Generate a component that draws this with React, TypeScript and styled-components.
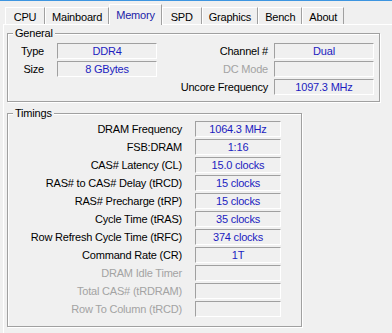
import React from 'react';
import styled, {createGlobalStyle} from "styled-components";

const GlobalStyle = createGlobalStyle`
  html, body {
    margin: 0;
    padding: 0;
    background: #f0f0f0;
    overflow: hidden;
  }
  body {
    font-family: "Liberation Sans", Arial, sans-serif;
    font-size: 11px;
    letter-spacing: -0.2px;
    color: #000;
  }
`

const tabs = ['CPU', 'Mainboard', 'Memory', 'SPD', 'Graphics', 'Bench', 'About'];

type Field = { label: string; value?: string; disabled?: boolean };

const generalLeft: Field[] = [
    {label: 'Type', value: 'DDR4'},
    {label: 'Size', value: '8 GBytes'},
];

const generalRight: Field[] = [
    {label: 'Channel #', value: 'Dual'},
    {label: 'DC Mode', disabled: true},
    {label: 'Uncore Frequency', value: '1097.3 MHz'},
];

const timings: Field[] = [
    {label: 'DRAM Frequency', value: '1064.3 MHz'},
    {label: 'FSB:DRAM', value: '1:16'},
    {label: 'CAS# Latency (CL)', value: '15.0 clocks'},
    {label: 'RAS# to CAS# Delay (tRCD)', value: '15 clocks'},
    {label: 'RAS# Precharge (tRP)', value: '15 clocks'},
    {label: 'Cycle Time (tRAS)', value: '35 clocks'},
    {label: 'Row Refresh Cycle Time (tRFC)', value: '374 clocks'},
    {label: 'Command Rate (CR)', value: '1T'},
    {label: 'DRAM Idle Timer', disabled: true},
    {label: 'Total CAS# (tRDRAM)', disabled: true},
    {label: 'Row To Column (tRCD)', disabled: true},
];

const App = () => {
    return (
        <Window>
            <GlobalStyle/>
            <TabBar>
                {tabs.map(t => (
                    <Tab key={t} $active={t === 'Memory'}>{t}</Tab>
                ))}
            </TabBar>
            <Panel>
                <Group $top={9} $bottom={6} $width={373}>
                    <Legend>General</Legend>
                    <GeneralGrid>
                        <Label>{generalLeft[0].label}</Label>
                        <ValueBox>{generalLeft[0].value}</ValueBox>
                        <Label>{generalRight[0].label}</Label>
                        <ValueBox>{generalRight[0].value}</ValueBox>

                        <Label>{generalLeft[1].label}</Label>
                        <ValueBox>{generalLeft[1].value}</ValueBox>
                        <Label $disabled>{generalRight[1].label}</Label>
                        <ValueBox/>

                        <span/>
                        <span/>
                        <Label>{generalRight[2].label}</Label>
                        <ValueBox>{generalRight[2].value}</ValueBox>
                    </GeneralGrid>
                </Group>

                <Group $top={7} $bottom={9} $width={295}>
                    <Legend>Timings</Legend>
                    <TimingsGrid>
                        {timings.map(f => (
                            <React.Fragment key={f.label}>
                                <Label $disabled={f.disabled}>{f.label}</Label>
                                <ValueBox>{f.value}</ValueBox>
                            </React.Fragment>
                        ))}
                    </TimingsGrid>
                </Group>
            </Panel>
        </Window>
    );
};

export default App;


const Window = styled.div`
  width: 392px;
  height: 333px;
  border-top: 1px solid #3d95e0;
  box-sizing: border-box;
  display: flex;
  flex-direction: column;
  overflow: hidden;
`

const TabBar = styled.div`
  display: flex;
  align-items: flex-end;
  flex: 0 0 23px;
  padding-left: 5px;
  position: relative;
  z-index: 1;
`

const Tab = styled.div<{ $active?: boolean }>`
  box-sizing: border-box;
  height: ${p => p.$active ? 21 : 17}px;
  margin-bottom: ${p => p.$active ? -1 : 0}px;
  min-width: 40px;
  padding: ${p => p.$active ? 0 : 1}px 6px 0;
  display: flex;
  align-items: center;
  justify-content: center;
  border-left: 1px solid #fff;
  border-top: 1px solid #fff;
  border-right: 1px solid #a0a0a0;
  background: #f0f0f0;
  color: ${p => p.$active ? '#1c1ca8' : '#000'};
`

const Panel = styled.div`
  flex: 1;
  margin-left: 3px;
  border-top: 1px solid #fff;
  border-left: 1px solid #fff;
  padding: 8px 0 0 3px;
  display: flex;
  flex-direction: column;
  gap: 11px;
`

const Group = styled.div<{ $top: number; $bottom: number; $width: number }>`
  position: relative;
  box-sizing: border-box;
  width: ${p => p.$width}px;
  border: 1px solid #a0a0a0;
  box-shadow: inset 1px 1px 0 #fff, 1px 1px 0 #fff;
  padding: ${p => p.$top}px 0 ${p => p.$bottom}px 0;
`

const Legend = styled.span`
  position: absolute;
  top: -7px;
  left: 5px;
  padding: 0 2px;
  line-height: 13px;
  background: #f0f0f0;
`

const GeneralGrid = styled.div`
  display: grid;
  grid-template-columns: 49px 100px 1fr 100px;
  grid-auto-rows: 16px;
  row-gap: 2px;
  padding-right: 5px;
`

const TimingsGrid = styled.div`
  display: grid;
  grid-template-columns: 187px 86px;
  grid-auto-rows: 16px;
  row-gap: 2px;
`

const Label = styled.div<{ $disabled?: boolean }>`
  display: flex;
  align-items: center;
  justify-content: flex-end;
  padding-right: 13px;
  white-space: nowrap;
  color: ${p => p.$disabled ? '#a3a3a3' : '#000'};

  ${GeneralGrid} &:nth-child(4n+3) {
    padding-right: 6px;
  }
`

const ValueBox = styled.div`
  box-sizing: border-box;
  display: flex;
  align-items: center;
  justify-content: center;
  border-top: 1px solid #a0a0a0;
  border-left: 1px solid #a0a0a0;
  border-right: 1px solid #fff;
  border-bottom: 1px solid #fff;
  color: #1c1cc0;
  white-space: nowrap;
`
